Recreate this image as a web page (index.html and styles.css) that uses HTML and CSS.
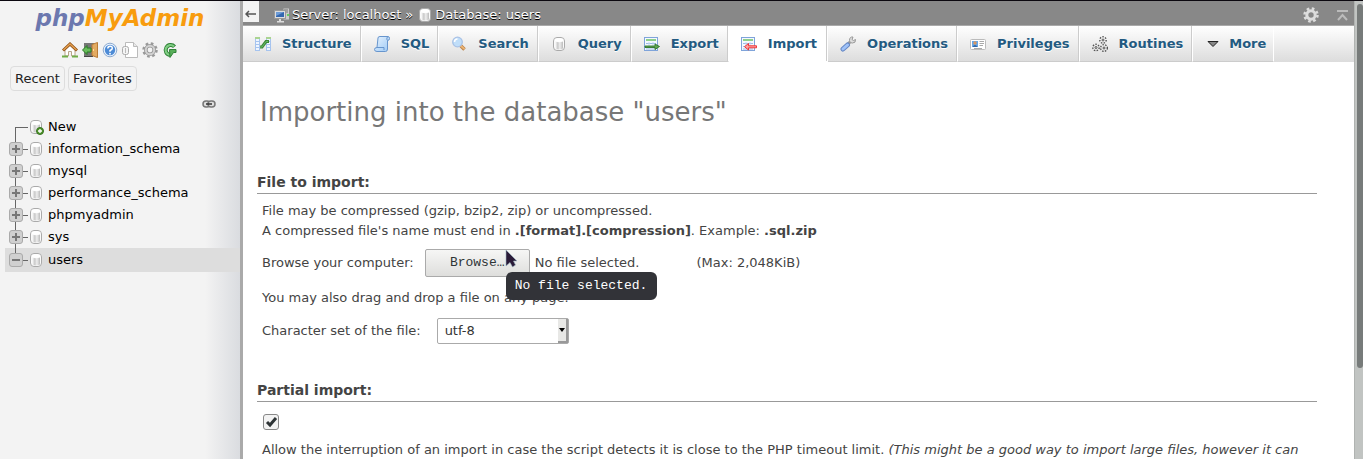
FILE: index.html
```
<!DOCTYPE html>
<html lang="en">
<head>
<meta charset="utf-8">
<title>phpMyAdmin</title>
<link rel="stylesheet" href="styles.css">
</head>
<body>
<svg class="defs" aria-hidden="true">
  <defs>
    <linearGradient id="metal"><stop offset="0" stop-color="#fff"/><stop offset=".35" stop-color="#c8c8c8"/><stop offset=".6" stop-color="#eee"/><stop offset="1" stop-color="#bbb"/></linearGradient>
    <linearGradient id="blue" x2="1" y2="1"><stop offset="0" stop-color="#e8f4ff"/><stop offset="1" stop-color="#9cc8f4"/></linearGradient>
    <symbol id="db" viewBox="0 0 16 16"><rect x="2.500" y="1.500" width="11" height="13" rx="3.500" fill="#fafafa" stroke="#aaa"/><path d="M4 5.500v7q4 2 8 0v-7q-4 1.500-8 0z" fill="url(#metal)"/><ellipse cx="8" cy="4" rx="4.500" ry="1.700" fill="#fff"/></symbol>
    <symbol id="table" viewBox="0 0 16 16"><rect x=".5" y="1.500" width="13" height="13" fill="#f4f9ff" stroke="#7fa4da"/><path d="M2 4h10" stroke="#8fd08a" stroke-width="2"/><path d="M2 7.500h10M2 10.500h10M2 13h10" stroke="#9dbbe6"/><path d="M5 6v8M9 6v8" stroke="#c3d7f2"/></symbol>
    <symbol id="gear" viewBox="0 0 16 16"><circle cx="8" cy="8" r="6.500" fill="none" stroke="currentColor" stroke-width="2.500" stroke-dasharray="2.600 2.505"/><circle cx="8" cy="8" r="4.200" fill="none" stroke="currentColor" stroke-width="3"/></symbol>
    <symbol id="gear-light" viewBox="0 0 16 16"><circle cx="8" cy="8" r="6.500" fill="none" stroke="#999" stroke-width="2.500" stroke-dasharray="2.600 2.505"/><circle cx="8" cy="8" r="4.200" fill="none" stroke="#999" stroke-width="3.600"/><circle cx="8" cy="8" r="4.200" fill="none" stroke="#d2d2d2" stroke-width="2"/></symbol>
  </defs>
</svg>
<div class="app">
  <nav class="sidebar">
    <a class="logo" href="#"><span class="logo-php">php</span><span class="logo-admin">MyAdmin</span></a>
    <div class="shortcuts">
      <a href="#" aria-label="Home"><svg viewBox="0 0 16 16"><path d="M3 8v6h3.500V9.500h3V14H13V8L8 3.500z" fill="#fff" stroke="#b9a48a"/><path d="M1 8.500 8 2l7 6.500" fill="none" stroke="#8e4f12" stroke-width="3"/><path d="M1.500 8 8 2l6.500 6" fill="none" stroke="#e5a050" stroke-width="1.400"/><path d="M0 14.500h6M10 14.500h6" stroke="#70ad48" stroke-width="2"/></svg></a>
      <a href="#" aria-label="Log out"><svg viewBox="0 0 16 16"><path d="M2 1h10v13H2z" fill="#777"/><path d="M2 14.500h9" stroke="#454545"/><path d="M10 2.500 15.500.5v15L10 13.500z" fill="#e3ab62" stroke="#b97b35"/><path d="M11.500 7v2" stroke="#ffe099"/><path d="M.5 8 5 3.500V6h4v4H5v2.500z" fill="#69bd5b" stroke="#297c27"/></svg></a>
      <a href="#" aria-label="Documentation"><svg viewBox="0 0 16 16"><circle cx="8" cy="8" r="6.800" fill="#e8f1fc" stroke="#8eabcf"/><circle cx="8" cy="8" r="5.200" fill="#4d8bd6"/><path d="M5.800 6.500q0-2.300 2.300-2.300t2.200 2Q10.300 7.500 8 8.500v1.200" fill="none" stroke="#fff" stroke-width="1.500"/><circle cx="8" cy="11.700" r=".9" fill="#fff"/></svg></a>
      <a href="#" aria-label="MariaDB documentation"><svg viewBox="0 0 16 16"><path d="M3.500.5h8l4 4v11h-12z" fill="#fff" stroke="#bbb"/><path d="M11.500.5v4h4" fill="#e8e8e8" stroke="#bbb"/><rect x=".5" y="4.500" width="6" height="8" rx="2" fill="#f4f4f4" stroke="#aaa"/><path d="M3.500 6v5" stroke="#bbb"/></svg></a>
      <a href="#" aria-label="Settings"><svg viewBox="0 0 16 16"><use href="#gear-light"/></svg></a>
      <a href="#" aria-label="Reload"><svg viewBox="0 0 16 16"><path d="M12.500 4.800A5 5 0 1 0 8 13" fill="none" stroke="#2f8136" stroke-width="4"/><path d="M12 4.400A5 5 0 1 0 8 13" fill="none" stroke="#7fcd83" stroke-width="2.200"/><path d="M7.500 7.500h6.500v3h-2.500L8 15.500z" fill="#58ae59" stroke="#2f8136"/></svg></a>
    </div>
    <div class="quick"><button type="button">Recent</button><button type="button">Favorites</button></div>
    <div class="link-row"><a href="#" aria-label="Unlink from main panel"><svg viewBox="0 0 14 8"><rect x="1" y="1" width="7" height="6" rx="3" fill="#ddd" stroke="#777" stroke-width="1.500"/><rect x="6" y="1" width="7" height="6" rx="3" fill="#ddd" stroke="#777" stroke-width="1.500"/><path d="M4 4h6" stroke="#333" stroke-width="1.500"/></svg></a></div>
    <ul class="tree">
      <li class="new"><span class="branch"></span><svg class="db-icon" viewBox="0 0 16 16"><use href="#db"/><circle cx="12" cy="12" r="3.500" fill="#50962e" stroke="#397320"/><path d="M12 10v4M10 12h4" stroke="#fff" stroke-width="1.300"/></svg><a href="#">New</a></li>
      <li><span class="branch"><button type="button" class="toggle" aria-label="Expand"></button></span><svg class="db-icon"><use href="#db"/></svg><a href="#">information_schema</a></li>
      <li><span class="branch"><button type="button" class="toggle" aria-label="Expand"></button></span><svg class="db-icon"><use href="#db"/></svg><a href="#">mysql</a></li>
      <li><span class="branch"><button type="button" class="toggle" aria-label="Expand"></button></span><svg class="db-icon"><use href="#db"/></svg><a href="#">performance_schema</a></li>
      <li><span class="branch"><button type="button" class="toggle" aria-label="Expand"></button></span><svg class="db-icon"><use href="#db"/></svg><a href="#">phpmyadmin</a></li>
      <li><span class="branch"><button type="button" class="toggle" aria-label="Expand"></button></span><svg class="db-icon"><use href="#db"/></svg><a href="#">sys</a></li>
      <li class="selected"><span class="branch"><button type="button" class="toggle open" aria-label="Collapse"></button></span><svg class="db-icon"><use href="#db"/></svg><a href="#">users</a></li>
    </ul>
  </nav>
  <div class="resizer"></div>
  <main class="main">
    <header class="topbar">
      <button type="button" class="collapse" aria-label="Hide panel"><svg viewBox="0 0 12 8"><path d="M1 4h10M4 1 1 4l3 3" fill="none" stroke="#555" stroke-width="1.500"/></svg></button>
      <div class="crumbs">
        <svg class="icon" viewBox="0 0 16 16"><path d="M9 1h6.500v12H9z" fill="#ccc" stroke="#888"/><path d="M10 3h4M10 5h4" stroke="#777"/><path d="M13 7h2v2h-2z" fill="#65cf61"/><rect x=".5" y="3.500" width="11" height="8" fill="#ddd" stroke="#999"/><path d="M2 5h8v5H2z" fill="#3467b0"/><path d="M2 5h8L2 9z" fill="#6d9bd6"/><path d="M5 12h2v2H5zM3 14h7v1.500H3z" fill="#ddd"/></svg>
        <a href="#">Server: localhost</a><span class="sep">»</span><svg class="icon"><use href="#db"/></svg><a href="#">Database: users</a>
      </div>
      <div class="tools">
        <a href="#" aria-label="Page settings"><svg viewBox="0 0 16 16"><use href="#gear"/></svg></a>
        <a href="#" aria-label="Back to top"><svg viewBox="0 0 16 16"><path d="M3 4h11M4 13l4.500-5 4.500 5" fill="none" stroke="#bbb" stroke-width="2"/></svg></a>
      </div>
    </header>
    <div class="tabs">
      <a href="#"><svg viewBox="0 0 16 16"><path d="M0 2h5v12H0zM11 2h5v12h-5z" fill="#eef5ff"/><path d="M0 2h5M11 2h5" stroke="#93c96f" stroke-width="1.500"/><path d="M.5 3v11.500M4.500 3v11M11.500 3v11M15.500 3v11M0 5.500h5M0 8.500h5M0 11.500h5M0 14.500h5M11 5.500h5M11 8.500h5M11 11.500h5M11 14.500h5" stroke="#a6c4ef"/><path d="M5 11h2l4-5.500h3" fill="none" stroke="#3c8a38" stroke-width="3"/><path d="M5 11h2l4-5.500h2" fill="none" stroke="#68b765"/></svg>Structure</a>
      <a href="#"><svg viewBox="0 0 16 16"><path d="M4 2q0-1.500 2-1.500h8q1.500 0 1.500 2t-2 2V13q0 2.500-2 2.500H3q-2.500 0-2.500-2T3 11.500z" fill="url(#blue)" stroke="#6795cd"/><path d="M13.500 4.500q-1.500-1 0-4M3 11.500h7v2.500" fill="none" stroke="#6795cd"/></svg>SQL</a>
      <a href="#"><svg viewBox="0 0 16 16"><path d="m9.500 9.500 4 4" stroke="#b98048" stroke-width="3.500"/><path d="m9.500 9.500 4 3.600" stroke="#edb574" stroke-width="1.800"/><circle cx="6.500" cy="6" r="4.800" fill="#c0def9" stroke="#a9c2e6" stroke-width="1.300"/><path d="M3.500 6q0-3 3-3" fill="none" stroke="#fff" stroke-width="1.500"/></svg>Search</a>
      <a href="#"><svg><use href="#db"/></svg>Query</a>
      <a href="#"><svg viewBox="0 0 16 16"><use href="#table"/><path d="M1 10h10V8l4.500 2.500L11 13.500v-2H1z" fill="#5fa653" stroke="#2f752a" stroke-width=".9"/></svg>Export</a>
      <a href="#" class="active"><svg viewBox="0 0 16 16"><use href="#table"/><path d="M15.500 9.800H7.500V7.500L3.500 10.700l4 3.300v-2.200h8z" fill="#ffa0a0" stroke="#ee3838"/></svg>Import</a>
      <a href="#"><svg viewBox="0 0 16 16"><path d="m7.500 8.500 3-3" stroke="#999" stroke-width="3"/><path d="m13 1-1 2.500 1.500 1 2-1q.5 3.500-3 3.500-3 .5-3-2.500Q9.500.5 13 1z" fill="#ddd" stroke="#999"/><path d="m3 13 4.500-4" stroke="#6688c5" stroke-width="5" stroke-linecap="round"/><path d="m3 13 4.500-4" stroke="#9fc2f8" stroke-width="3" stroke-linecap="round"/></svg>Operations</a>
      <a href="#"><svg viewBox="0 0 16 16"><rect x=".5" y="3.500" width="15" height="10" rx="1" fill="#fff" stroke="#bbb"/><path d="M2 5h6v6H2z" fill="#64a8ea"/><circle cx="5" cy="7" r="1.700" fill="#d99660"/><path d="M2.500 11q2.500-4 5 0z" fill="#3265a4"/><path d="M9.500 5.500H14M9.500 7.500H14M9.500 9.500H13M4 12.500h8" stroke="#aaa"/></svg>Privileges</a>
      <a href="#"><svg viewBox="0 0 16 16"><g fill="none" stroke="#555"><g stroke-width="1.400" stroke-dasharray="1.500 1.300"><circle cx="11" cy="4" r="3.200"/><circle cx="4" cy="11.500" r="3.200"/><circle cx="12" cy="12" r="3.400"/></g><circle cx="11" cy="4" r="1"/><circle cx="4" cy="11.500" r="1"/><circle cx="12" cy="12" r="1"/></g></svg>Routines</a>
      <a href="#" class="more"><svg viewBox="0 0 12 8"><path d="M1 1.500h10L6 6.500z" fill="#888" stroke="#222"/></svg>More</a>
    </div>
    <form class="content">
      <h1>Importing into the database "users"</h1>
      <section>
        <h2>File to import:</h2>
        <p>File may be compressed (gzip, bzip2, zip) or uncompressed.<br>A compressed file's name must end in <b>.[format].[compression]</b>. Example: <b>.sql.zip</b></p>
        <div class="row browse-row">
          <label for="browse">Browse your computer:</label>
          <div class="browse-box">
            <button type="button" id="browse" class="browse">Browse…</button>
            <svg class="cursor" viewBox="0 0 13 20"><path d="M1 1v16l4-3.500 2.500 4.500 3-2-2-4H12z" fill="#2b1b38" stroke="#9cb7c5" stroke-width=".6"/></svg>
            <div class="tooltip" role="tooltip">No file selected.</div>
          </div>
          <span class="file-name">No file selected.</span>
          <span>(Max: 2,048KiB)</span>
        </div>
        <p class="drag">You may also drag and drop a file on any page.</p>
        <div class="row charset-row">
          <label for="charset">Character set of the file:</label>
          <div class="select-box">
            <select id="charset"><option>utf-8</option></select>
            <span class="select-arrow"><svg viewBox="0 0 6 4"><path d="M0 0h6L3 4z"/></svg></span>
          </div>
        </div>
      </section>
      <section class="partial">
        <h2>Partial import:</h2>
        <input type="checkbox" id="interrupt" checked>
        <label class="interrupt-label" for="interrupt">Allow the interruption of an import in case the script detects it is close to the PHP timeout limit. <i>(This might be a good way to import large files, however it can</i></label>
      </section>
    </form>
  </main>
  <div class="scrollbar"><div class="thumb"></div></div>
</div>
</body>
</html>
```
FILE: styles.css
```
* { box-sizing: border-box; }
body { margin: 0; overflow: hidden; font: 13px/20px "DejaVu Sans", sans-serif; color: #444; background: #fff; }
a { color: inherit; text-decoration: none; }
svg { display: block; flex: none; }
button { font: inherit; padding: 0; cursor: pointer; }
.defs { position: absolute; width: 0; height: 0; }
.app { display: flex; height: 100vh; border-top: 1px solid #0b080f; }

.sidebar { flex: none; width: 240px; color: #000; background: linear-gradient(90deg, #f3f3f3 205px, #dadce0); }
.logo { display: block; text-align: center; height: 38px; font: italic bold 23px/34px "DejaVu Sans", sans-serif; }
.logo-php { color: #6c78af; }
.logo-admin { color: #f89c0e; }
.shortcuts { display: flex; justify-content: center; gap: 4px; padding-top: 2px; }
.shortcuts svg { width: 16px; height: 16px; }
.shortcuts a { padding: 1px 0; }
.quick { display: flex; gap: 3px; padding: 7px 10px 0; }
.quick button { height: 25px; padding: 0 4px; color: #222; background: #f3f3f3; border: 1px solid #ddd; border-radius: 4px; }
.link-row { display: flex; justify-content: flex-end; padding: 9px 24px 8px 0; }
.link-row svg { width: 14px; height: 8px; }
.tree { list-style: none; margin: 0; padding: 0 0 0 5px; }
.tree li { display: flex; align-items: center; height: 22px; }
.tree .selected { height: 24px; background: #ddd; }
.branch { position: relative; display: flex; align-items: center; align-self: stretch; width: 23px; padding-left: 4px; }
.branch::before { content: ""; position: absolute; left: 10px; top: 0; bottom: 0; border-left: 1px solid #666; }
.branch::after { content: ""; position: absolute; left: 10px; right: 0; top: 50%; border-top: 1px solid #666; }
.new .branch::before { top: 50%; }
.selected .branch::before { bottom: 50%; }
.toggle { position: relative; z-index: 1; width: 14px; height: 14px; border: 1px solid #aaa; border-radius: 3px; background: linear-gradient(#777, #777) center / 8px 2px no-repeat, linear-gradient(#777, #777) center / 2px 8px no-repeat, #d0d0d0; }
.toggle.open { background: linear-gradient(#777, #777) center / 8px 2px no-repeat, #d0d0d0; }
.db-icon { width: 16px; height: 16px; margin-right: 4px; }

.resizer { flex: none; width: 3px; background: #aaa; }
.main { flex: 1; min-width: 0; overflow: hidden; }
.topbar { display: flex; align-items: center; height: 25px; background: #888; border-bottom: 1px solid #aaa; color: #fff; text-shadow: 0 1px 0 #000; }
.collapse { display: flex; align-items: center; justify-content: center; align-self: flex-start; width: 16px; height: 21px; padding-top: 4px; border: 0; background: #f3f3f3; }
.collapse svg { width: 12px; height: 8px; }
.crumbs { display: flex; align-items: center; gap: 2px; padding: 3px 0 0 15px; }
.icon { width: 16px; height: 16px; }
.sep { margin: 0 2px; }
.tools { display: flex; gap: 15px; margin-left: auto; padding: 3px 4px 0 0; color: #ddd; }
.tools svg { width: 16px; height: 16px; }
.tabs { display: flex; height: 36px; background: linear-gradient(#fff, #dcdcdc); }
.tabs a { display: flex; align-items: center; gap: 11px; padding: 0 9px 0 12px; border-right: 1px solid #fff; border-bottom: 1px solid #ccc; font-weight: bold; color: #235a81; text-shadow: 0 1px 0 #fff; box-shadow: inset -1px 0 #ccc; }
.tabs svg { width: 16px; height: 16px; }
.tabs .active { padding-right: 10px; background: #fff; border-bottom-color: #fff; }
.tabs .more { padding: 0 7px 0 14px; box-shadow: none; gap: 10px; }
.tabs .more svg { width: 12px; height: 8px; }

.content { padding: 32px 37px 0 14px; }
h1 { margin: 0 0 42px 3px; font-size: 26px; line-height: 36px; font-weight: normal; color: #777; }
h2 { margin: 0; padding-bottom: 1px; font-size: 14px; line-height: 20px; border-bottom: 1px solid #999; }
p { margin: 7px 5px 0; }
.row { display: flex; align-items: center; margin-left: 5px; }
.browse-row { margin-top: 8px; }
.browse-box { position: relative; margin: 0 5px 0 11px; }
.browse { display: block; width: 105px; height: 28px; font: 13px/20px "Liberation Mono", monospace; color: #2e3436; border: 1px solid #aaa; border-radius: 2px; background: linear-gradient(#f6f6f5, #dededc); }
.file-name { margin-right: 57px; }
.cursor { position: absolute; left: 80px; top: 0; width: 13px; height: 20px; }
.tooltip { position: absolute; left: 81px; top: 23px; padding: 4px 10px 4px 9px; white-space: nowrap; font: 13px/20px "Liberation Mono", monospace; color: #fff; background: #323338; border-radius: 6px; }
.drag { margin-top: 11px; }
.charset-row { margin-top: 10px; }
.select-box { position: relative; margin-left: 16px; }
select { display: block; appearance: none; width: 132px; height: 26px; padding: 0 20px 0 7px; font: inherit; color: #333; background: #fff; border: 1px solid #aaa; border-radius: 2px; }
.select-arrow { position: absolute; right: 1px; top: 1px; bottom: 1px; display: flex; align-items: center; width: 10px; padding-left: 1px; background: #e8e8e6; border-right: 2px solid #999; border-bottom: 2px solid #999; pointer-events: none; }
.select-arrow svg { width: 6px; height: 4px; }
.partial { margin-top: 36px; }
input[type="checkbox"] { appearance: none; display: block; width: 16px; height: 16px; margin: 12px 0 10px 6px; border: 1px solid #888; border-radius: 3px; background: url("data:image/svg+xml,%3Csvg xmlns='http://www.w3.org/2000/svg' viewBox='0 0 14 14'%3E%3Cpath d='m3 7 3 3 6-7' fill='none' stroke='%232e3436' stroke-width='3'/%3E%3C/svg%3E") center / 14px no-repeat, #f3f3f3; }
.interrupt-label { display: block; margin-left: 5px; white-space: nowrap; }

.scrollbar { flex: none; width: 9px; padding: 3px 0 0 2px; background: #c1c4c2; border-left: 1px solid #b0b3b1; }
.thumb { height: 80%; border-radius: 4px; background: #777b7a; }
```
